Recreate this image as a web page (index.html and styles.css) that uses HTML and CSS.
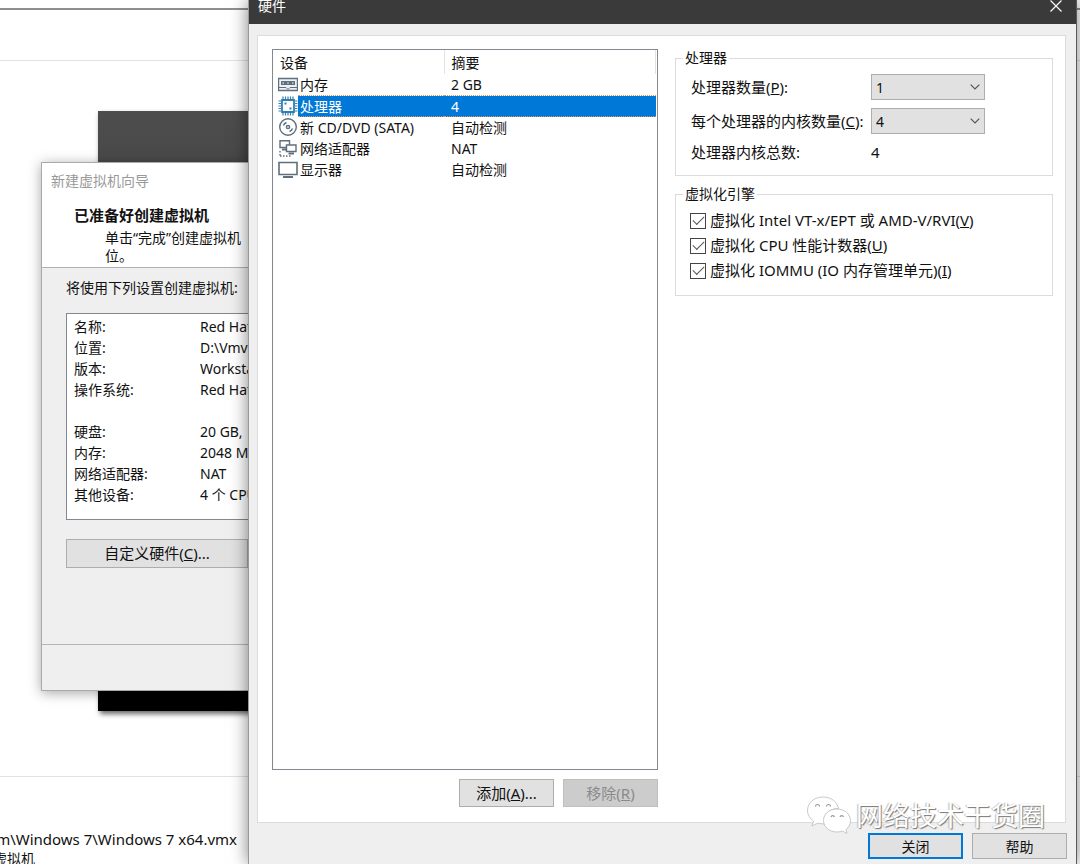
FILE: index.html
```html
<!DOCTYPE html>
<html lang="zh-CN">
<head>
<meta charset="utf-8">
<title>硬件</title>
<link rel="stylesheet" href="styles.css">
</head>
<body>
<main class="desktop">
  <section class="host">
    <div class="host-bar"></div>
    <div class="host-head"></div>
    <div class="host-view"></div>
    <div class="host-info">
      <p class="host-path">m\Windows 7\Windows 7 x64.vmx</p>
      <p class="host-note">虚拟机</p>
    </div>
  </section>

  <div class="guest-screen"></div>

  <section class="wizard" aria-label="新建虚拟机向导">
    <header class="wizard-head">
      <p class="wizard-title">新建虚拟机向导</p>
      <h2 class="wizard-heading">已准备好创建虚拟机</h2>
      <p class="wizard-sub">单击“完成”创建虚拟机<br>位。</p>
    </header>
    <div class="wizard-body">
      <p class="wizard-lead">将使用下列设置创建虚拟机:</p>
      <dl class="settings">
        <dt>名称:</dt><dd>Red Hat</dd>
        <dt>位置:</dt><dd>D:\Vmv</dd>
        <dt>版本:</dt><dd>Worksta</dd>
        <dt>操作系统:</dt><dd>Red Hat</dd>
        <dt class="gap">硬盘:</dt><dd class="gap">20 GB,</dd>
        <dt>内存:</dt><dd>2048 MB</dd>
        <dt>网络适配器:</dt><dd>NAT</dd>
        <dt>其他设备:</dt><dd>4 个 CPU</dd>
      </dl>
      <button class="btn customize" type="button">自定义硬件(<u>C</u>)...</button>
    </div>
    <footer class="wizard-foot"></footer>
  </section>

  <section class="dialog" aria-label="硬件">
    <header class="title-bar">
      <h1 class="title">硬件</h1>
      <button class="close" type="button" aria-label="关闭">
        <svg width="14" height="12" viewBox="0 1 14 12"><path d="M1.500 1.500L12.500 12.500M12.500 1.500L1.500 12.500" fill="none" stroke="#f4f4f4" stroke-width="1.300"/></svg>
      </button>
    </header>
    <div class="panel">
      <div class="devices">
        <div class="list">
          <table class="device-table">
            <colgroup><col class="col-icon"><col class="col-name"><col></colgroup>
            <thead>
              <tr><th colspan="2">设备</th><th class="summary-head">摘要</th></tr>
            </thead>
            <tbody>
              <tr>
                <td class="icon"><svg width="20" height="20" viewBox="0 0 20 20"><path d="M.5 3.500H19.500V15.500H.5Z" fill="#eef1f3" stroke="#5f6f7d" stroke-width="1.400"/><path d="M3 6H17V10H3Z" fill="#5f6f7d"/><path d="M4.500 7.500H6V8.500H4.500ZM9.200 7.500H10.800V8.500H9.200ZM14 7.500H15.500V8.500H14Z" fill="#fff"/><path d="M1 12.500H8L10 14.500L12 12.500H19" fill="none" stroke="#5f6f7d"/></svg></td>
                <td>内存</td><td>2 GB</td>
              </tr>
              <tr class="selected">
                <td class="icon"><svg width="20" height="20" viewBox="0 0 20 20"><g stroke="#3e7fa6" fill="none"><path d="M5 .5V3M7.500 .5V3M10 .5V3M12.500 .5V3M15 .5V3M5 17V19.500M7.500 17V19.500M10 17V19.500M12.500 17V19.500M15 17V19.500M.5 5H3M.5 7.500H3M.5 10H3M.5 12.500H3M.5 15H3M17 5H19.500M17 7.500H19.500M17 10H19.500M17 12.500H19.500M17 15H19.500" stroke-width="1.200"/><path d="M4 4H16V16H4Z" fill="#fff" stroke="#2f7fb5" stroke-width="1.800"/></g><path d="M6.500 6.500H8.500V8.500H6.500ZM11.500 11.500H13.500V13.500H11.500Z" fill="#2f7fb5"/></svg></td>
                <td>处理器</td><td>4</td>
              </tr>
              <tr>
                <td class="icon"><svg width="20" height="20" viewBox="0 0 20 20"><g fill="none" stroke="#5f6f7d"><circle cx="10" cy="10" r="8.300" stroke-width="1.400"/><circle cx="10" cy="10" r="1.600" stroke-width="1.500"/><path d="M5.500 8.500A5 5 0 0 1 8.500 5.500M14.500 11.500A5 5 0 0 1 11.500 14.500" stroke-width="1.500"/></g></svg></td>
                <td>新 CD/DVD (SATA)</td><td>自动检测</td>
              </tr>
              <tr>
                <td class="icon"><svg width="20" height="20" viewBox="0 0 20 20"><g fill="none" stroke="#5f6f7d" stroke-width="1.400"><path d="M2 1.700H11.500V8.500H2Z"/><path d="M4 10.500H8" stroke-width="2"/><path d="M8.500 6H18V12.500H8.500Z" fill="#fff"/><path d="M10.500 14.500H16" stroke-width="2"/><path d="M2 12V17M2 17H13" stroke-dasharray="1.500 1.500"/></g></svg></td>
                <td>网络适配器</td><td>NAT</td>
              </tr>
              <tr>
                <td class="icon"><svg width="20" height="20" viewBox="0 0 20 20"><path d="M1 2.500H19V14.500H1Z" fill="none" stroke="#5f6f7d" stroke-width="1.600"/><path d="M5 17H15" stroke="#5f6f7d" stroke-width="2"/></svg></td>
                <td>显示器</td><td>自动检测</td>
              </tr>
            </tbody>
          </table>
        </div>
        <div class="list-actions">
          <button class="btn" type="button">添加(<u>A</u>)...</button>
          <button class="btn" type="button" disabled>移除(<u>R</u>)</button>
        </div>
      </div>

      <div class="options">
        <fieldset class="group">
          <legend>处理器</legend>
          <div class="fields">
            <label for="cpus">处理器数量(<u>P</u>):</label>
            <span class="combo">
              <select id="cpus"><option>1</option></select>
              <svg width="10" height="6" viewBox="0 0 10 6"><path d="M.7.7L5 5L9.300.7" fill="none" stroke="#555" stroke-width="1.200"/></svg>
            </span>
            <label for="cores">每个处理器的内核数量(<u>C</u>):</label>
            <span class="combo">
              <select id="cores"><option>4</option></select>
              <svg width="10" height="6" viewBox="0 0 10 6"><path d="M.7.7L5 5L9.300.7" fill="none" stroke="#555" stroke-width="1.200"/></svg>
            </span>
            <span>处理器内核总数:</span>
            <output>4</output>
          </div>
        </fieldset>
        <fieldset class="group">
          <legend>虚拟化引擎</legend>
          <div class="checks">
            <label class="check"><input type="checkbox" checked><span>虚拟化 Intel VT-x/EPT 或 AMD-V/RVI(<u>V</u>)</span></label>
            <label class="check"><input type="checkbox" checked><span>虚拟化 CPU 性能计数器(<u>U</u>)</span></label>
            <label class="check"><input type="checkbox" checked><span>虚拟化 IOMMU (IO 内存管理单元)(<u>I</u>)</span></label>
          </div>
        </fieldset>
      </div>
    </div>
    <footer class="dialog-foot">
      <button class="btn default" type="button">关闭</button>
      <button class="btn" type="button">帮助</button>
    </footer>
    <div class="watermark">
      <svg width="46" height="40" viewBox="0 0 46 40">
        <g fill="#fff" stroke="#bbb" stroke-width=".8">
          <path d="M17 1C8 1 1.500 7 1.500 14.500C1.500 19 4 22.500 7.500 25L6 30L12 27C14 27.600 16 28 19 27.800C17 19 24 12 32.500 12.500C31 5.500 25 1 17 1Z"/>
          <path d="M31 13C23 13 17.500 18 17.500 24.500C17.500 31 23.500 36 31 36C33 36 35 35.600 36.500 35L41 37.500L40 33.500C42.500 31.500 44.500 28.500 44.500 24.500C44.500 18 38.500 13 31 13Z"/>
        </g>
        <g fill="none" stroke="#999" stroke-width="1.200">
          <path d="M9.500 10.500A2 2 0 0 1 13.500 10.500M20.500 10.500A2 2 0 0 1 24.500 10.500M25 21A1.800 1.800 0 0 1 28.500 21M34 21A1.800 1.800 0 0 1 37.500 21"/>
        </g>
      </svg>
      <span>网络技术干货圈</span>
    </div>
  </section>
</main>
</body>
</html>
```
FILE: styles.css
```css
* {
  box-sizing: border-box;
}

body,
h1,
h2,
p,
dl,
dd {
  margin: 0;
}

body,
button,
select {
  font-family: "Noto Sans", "Noto Sans CJK SC", sans-serif;
  font-size: 14px;
  line-height: 21px;
  color: #111;
}

.desktop {
  position: relative;
  height: 100vh;
  overflow: hidden;
  background: #fff;
}

/* Application window at the back */
.host {
  display: flex;
  flex-direction: column;
  height: 100%;
}

.host-bar {
  height: 10px;
  border-bottom: 2px solid #8e8e8e;
}

.host-head {
  height: 51px;
  border-bottom: 1px solid #e2e2e2;
}

.host-view {
  flex: 1;
  border-bottom: 1px solid #e2e2e2;
}

.host-info {
  height: 87px;
  padding-top: 53px;
  overflow: hidden;
  white-space: nowrap;
}

.host-path,
.host-note {
  display: flex;
  justify-content: flex-end;
  width: 237px;
  font-size: 15px;
  line-height: 19px;
}

.host-note {
  width: 35px;
  font-size: 14px;
}

.guest-screen {
  position: absolute;
  top: 111px;
  left: 98px;
  width: 400px;
  height: 600px;
  background: linear-gradient(#4d4d4d, #484848 10%, #000 90%);
  box-shadow: 2px 3px 5px rgba(0, 0, 0, 0.6);
}

/* New virtual machine wizard */
.wizard {
  position: absolute;
  top: 162px;
  left: 41px;
  width: 500px;
  border: 1px solid #aaa;
  background: #efefef;
  box-shadow: 0 2px 12px rgba(0, 0, 0, 0.35);
  white-space: nowrap;
}

.wizard-head {
  padding: 7px 9px 2px;
  border-bottom: 1px solid #b0b0b0;
  background: #fff;
}

.wizard-title {
  color: #999;
}

.wizard-heading {
  padding: 14px 0 3px 23px;
  font-size: 15px;
  line-height: 21px;
  font-weight: 700;
}

.wizard-sub {
  padding-left: 54px;
  line-height: 18px;
}

.wizard-body {
  padding: 9px 24px 76px;
}

.settings {
  display: grid;
  grid-template-columns: 126px 1fr;
  margin: 15px 0 19px;
  padding: 2px 7px 14px;
  border: 1px solid #828790;
  background: #fff;
}

.settings .gap {
  padding-top: 21px;
}

.wizard-foot {
  height: 46px;
  border-top: 1px solid #b5b5b5;
}

/* Buttons */
.btn {
  width: 95px;
  height: 28px;
  padding: 0;
  border: 1px solid #adadad;
  background: #e1e1e1;
  font-size: 15px;
}

.btn:disabled {
  border-color: #bfbfbf;
  background: #ccc;
  color: #8a8a8a;
}

.btn.customize {
  width: 182px;
  height: 29px;
}

/* Hardware dialog */
.dialog {
  position: absolute;
  inset: 0 3px 0 248px;
  display: flex;
  flex-direction: column;
  border: solid #5a5a5a;
  border-width: 0 1px;
  border-left-color: #999;
  background: #efefef;
  box-shadow: 0 0 16px rgba(0, 0, 0, 0.5);
}

.title-bar {
  display: flex;
  justify-content: space-between;
  height: 24px;
  padding: 0 13px 0 9px;
  background: #3a3a3a;
}

.title {
  font-size: 14px;
  font-weight: 400;
  line-height: 12px;
  color: #fff;
}

.close {
  display: flex;
  height: 12px;
  padding: 0;
  border: 0;
  background: none;
}

.panel {
  flex: 1;
  display: flex;
  gap: 17px;
  margin: 11px 10px 0 8px;
  padding: 12px 12px 15px 14px;
  border: 1px solid #dcdcdc;
  background: #fff;
}

.devices {
  display: flex;
  flex-direction: column;
  gap: 9px;
  width: 386px;
}

.list {
  flex: 1;
  margin-top: 1px;
  padding-right: 1px;
  border: 1px solid #828790;
}

.list-actions {
  display: flex;
  justify-content: flex-end;
  gap: 9px;
}

.device-table {
  width: 100%;
  table-layout: fixed;
  border-collapse: collapse;
}

.col-icon {
  width: 25px;
}

.col-name {
  width: 146px;
}

.device-table th {
  height: 24px;
  padding: 0 0 0 7px;
  border-right: 1px solid #e2e2e2;
  font-weight: 400;
  text-align: left;
}

.device-table td {
  height: 21px;
  padding: 0 0 0 2px;
  white-space: nowrap;
}

.device-table td:last-child {
  padding-left: 7px;
}

.device-table .icon {
  padding-left: 5px;
}

.icon svg {
  display: block;
}

.selected td:not(.icon) {
  border: dotted #d69a62;
  border-width: 1px 0;
  background: #0078d7;
  color: #fff;
  line-height: 19px;
}

/* Processor options */
.options {
  flex: 1;
  display: flex;
  flex-direction: column;
  gap: 8px;
}

.group {
  min-width: 0;
  margin: 0;
  padding: 0 14px;
  border: 1px solid #dcdcdc;
}

.group legend {
  margin-left: -7px;
  padding: 0 2px;
  line-height: 20px;
}

.fields {
  display: grid;
  grid-template-columns: 180px 114px;
  align-items: center;
  row-gap: 8px;
  padding: 6px 0 13px 1px;
  font-size: 15px;
  line-height: 20px;
}

.combo {
  position: relative;
  display: flex;
}

.combo select {
  width: 100%;
  height: 26px;
  padding: 0 4px;
  appearance: none;
  border: 1px solid #adadad;
  border-radius: 0;
  background: #e1e1e1;
}

.combo svg {
  position: absolute;
  top: 10px;
  right: 5px;
  pointer-events: none;
}

.checks {
  display: grid;
  gap: 4px;
  padding: 6px 0 14px;
  font-size: 15px;
}

.check {
  display: flex;
  align-items: center;
  gap: 4px;
}

.check input {
  display: grid;
  place-items: center;
  width: 16px;
  height: 16px;
  margin: 0;
  appearance: none;
  border: 1px solid #444;
  background: #fff;
}

.check input:checked::before {
  content: "";
  width: 10px;
  height: 5px;
  margin-bottom: 3px;
  border: solid #555;
  border-width: 0 0 1px 1px;
  transform: rotate(-45deg);
}

.dialog-foot {
  display: flex;
  justify-content: flex-end;
  gap: 9px;
  padding: 10px 9px 5px;
}

.dialog-foot .btn {
  height: 26px;
  font-size: 14px;
}

.dialog-foot .default {
  border: 2px solid #0078d7;
}

.watermark {
  position: absolute;
  right: 31px;
  bottom: 28px;
  display: flex;
  align-items: center;
  gap: 4px;
  font-size: 27px;
  line-height: 40px;
  color: #fff;
  text-shadow: 1px 1px 1px #777, -1px 0 1px #bbb;
  pointer-events: none;
}
```
